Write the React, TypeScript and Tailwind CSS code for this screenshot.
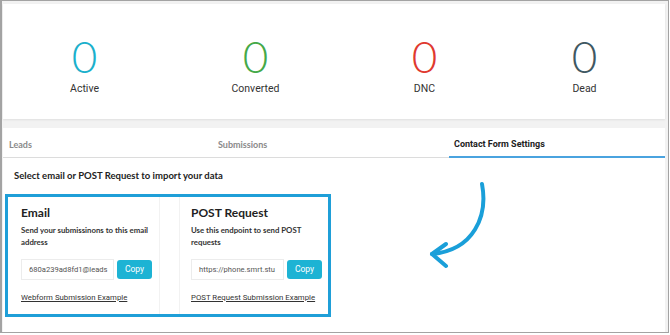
const stats = [
  { label: 'Active', color: 'text-[#1bb0cc]', w: 'w-[164px]' },
  { label: 'Converted', color: 'text-[#45a948]', w: 'w-[180px]' },
  { label: 'DNC', color: 'text-[#e0392f]', w: 'w-[160px]' },
  { label: 'Dead', color: 'text-[#3f5862]', w: 'w-[162px]' },
];

function ImportCard({
  title,
  desc,
  value,
  link,
  className,
}: {
  title: string;
  desc: string;
  value: string;
  link: string;
  className?: string;
}) {
  return (
    <div className={`h-full pt-[8px] ${className ?? ''}`}>
      <h3 className="font-['Lato'] font-bold text-[12px] leading-[16px] text-[#222]">{title}</h3>
      <p className="mt-[4px] w-[136px] font-['Lato'] font-bold text-[7.8px] leading-[11.5px] text-[#333]">{desc}</p>
      <div className="mt-[11px] flex items-center gap-[3px]">
        <div className="w-[93px] h-[21px] flex items-center pl-[7px] overflow-hidden whitespace-nowrap bg-white border border-[#ececec] font-['Roboto'] text-[7.6px] text-[#555]">
          {value}
        </div>
        <button className="w-[35px] h-[19px] rounded-[3px] bg-[#1db3d4] text-white font-['Roboto'] text-[8.5px]">
          Copy
        </button>
      </div>
      <a className="block mt-[12px] font-['Roboto'] text-[7.8px] text-[#333] underline">{link}</a>
    </div>
  );
}

export default function App() {
  return (
    <div className="w-[670px] h-[335px] bg-white">
      <div className="w-[669px] h-[333px] border border-l-2 border-[#a3a3a3] bg-[#f2f2f2] pt-[3px] pl-[1px] flex flex-col">
        {/* stats */}
        <div className="w-[662px] h-[115px] shrink-0 bg-white shadow-[0_1px_2px_rgba(0,0,0,0.08)] flex pt-[31px]">
          {stats.map((s) => (
            <div key={s.label} className={`${s.w} flex flex-col items-center`}>
              <div className={`font-['Lato'] font-light text-[44px] leading-[42px] ${s.color}`}>0</div>
              <div className="mt-[4px] font-['Roboto'] text-[10.5px] text-[#333]">{s.label}</div>
            </div>
          ))}
        </div>

        {/* tabs panel */}
        <div className="mt-[9px] w-[662px] flex-1 bg-white">
          <div className="h-[30px] flex border-b border-[#dcdcdc]">
            <div className="w-[210px] pl-[6px] pt-[5px] flex items-center font-['Lato'] font-bold text-[9px] text-[#8a8a8a]">Leads</div>
            <div className="w-[236px] pl-[5px] pt-[5px] flex items-center font-['Lato'] font-bold text-[9px] text-[#8a8a8a]">Submissions</div>
            <div className="flex-1 pl-[5px] pt-[5px] flex items-center font-['Roboto'] font-bold text-[9px] text-[#222] border-b-2 border-[#4aa3df] mb-[-1px]">
              Contact Form Settings
            </div>
          </div>
          <p className="mt-[11px] ml-[11px] font-['Lato'] font-bold text-[9.5px] leading-[14px] text-[#222]">
            Select email or POST Request to import your data
          </p>
          <div className="mt-[11px] flex">
            <div className="ml-[2px] w-[326px] h-[123px] border-[3px] border-[#1f9fd8] flex">
              <ImportCard
                className="w-[152px] pl-[13px] border-r border-[#f2f2f2]"
                title="Email"
                desc="Send your submissinons to this email address"
                value="680a239ad8fd1@leads"
                link="Webform Submission Example"
              />
              <div className="w-[20px] border-r border-[#f2f2f2]" />
              <ImportCard
                className="flex-1 pl-[11px]"
                title="POST Request"
                desc="Use this endpoint to send POST requests"
                value="https://phone.smrt.stu"
                link="POST Request Submission Example"
              />
            </div>
            <svg width="80" height="100" viewBox="0 0 80 100" className="ml-[95px] mt-[-24px]">
              <g fill="none" stroke="#1a9fd9" strokeWidth="4" strokeLinecap="round" strokeLinejoin="round">
                <path d="M56 14 C62 46 48 80 6 84" />
                <path d="M20 74 L6 84 L20 96" />
              </g>
            </svg>
          </div>
        </div>
      </div>
    </div>
  );
}
